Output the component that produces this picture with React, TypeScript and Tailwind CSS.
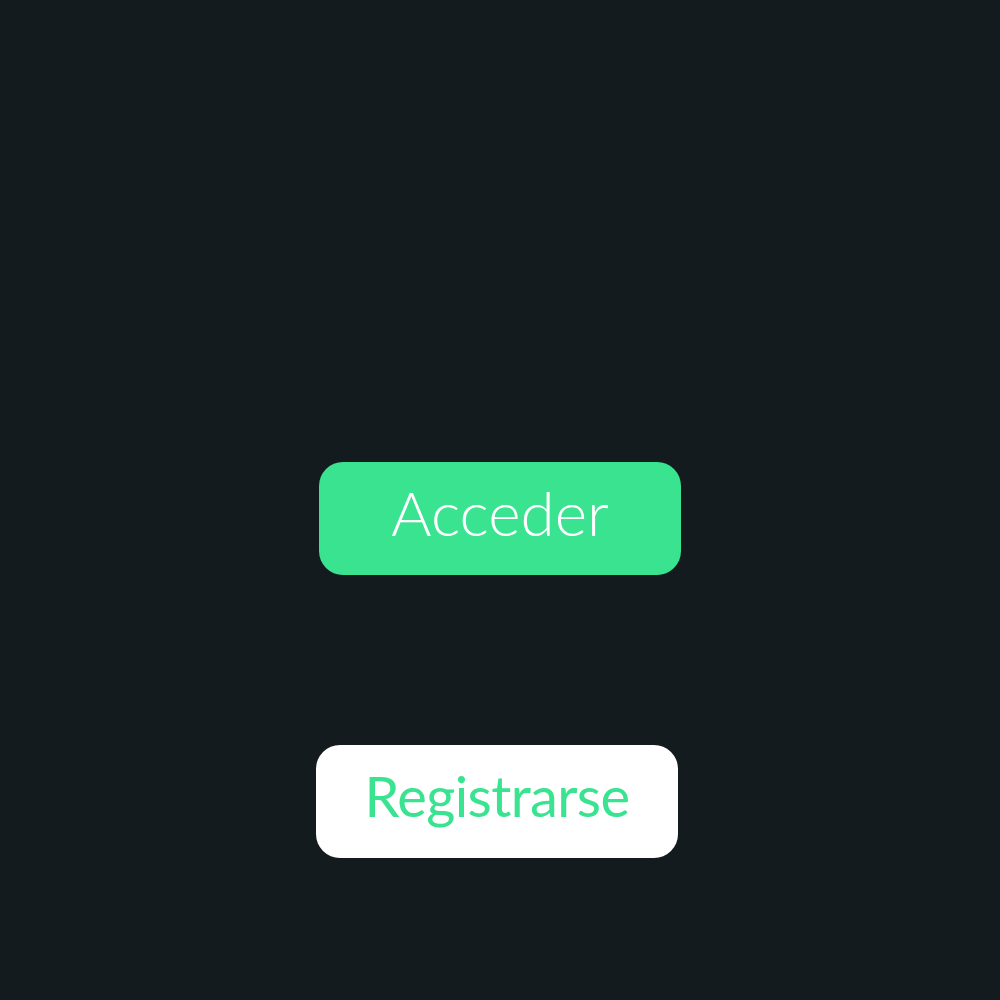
export default function App() {
    return (
        <div className="min-h-screen w-full bg-[#141b1f] flex flex-col items-center pt-[462px] font-['Lato',sans-serif]">
            {/* ACCEDER */}
            <button className="w-[362px] h-[113px] rounded-[24px] bg-[#39e38f] text-white text-[62px] font-light flex items-center justify-center leading-none pb-[14px]">
                Acceder
            </button>

            {/* REGISTRARSE */}
            <button className="mt-[170px] mr-[6px] w-[362px] h-[113px] rounded-[24px] bg-white text-[#39e38f] text-[56px] tracking-[-0.6px] flex items-center justify-center leading-none pb-[12px]">
                Registrarse
            </button>
        </div>
    );
}
